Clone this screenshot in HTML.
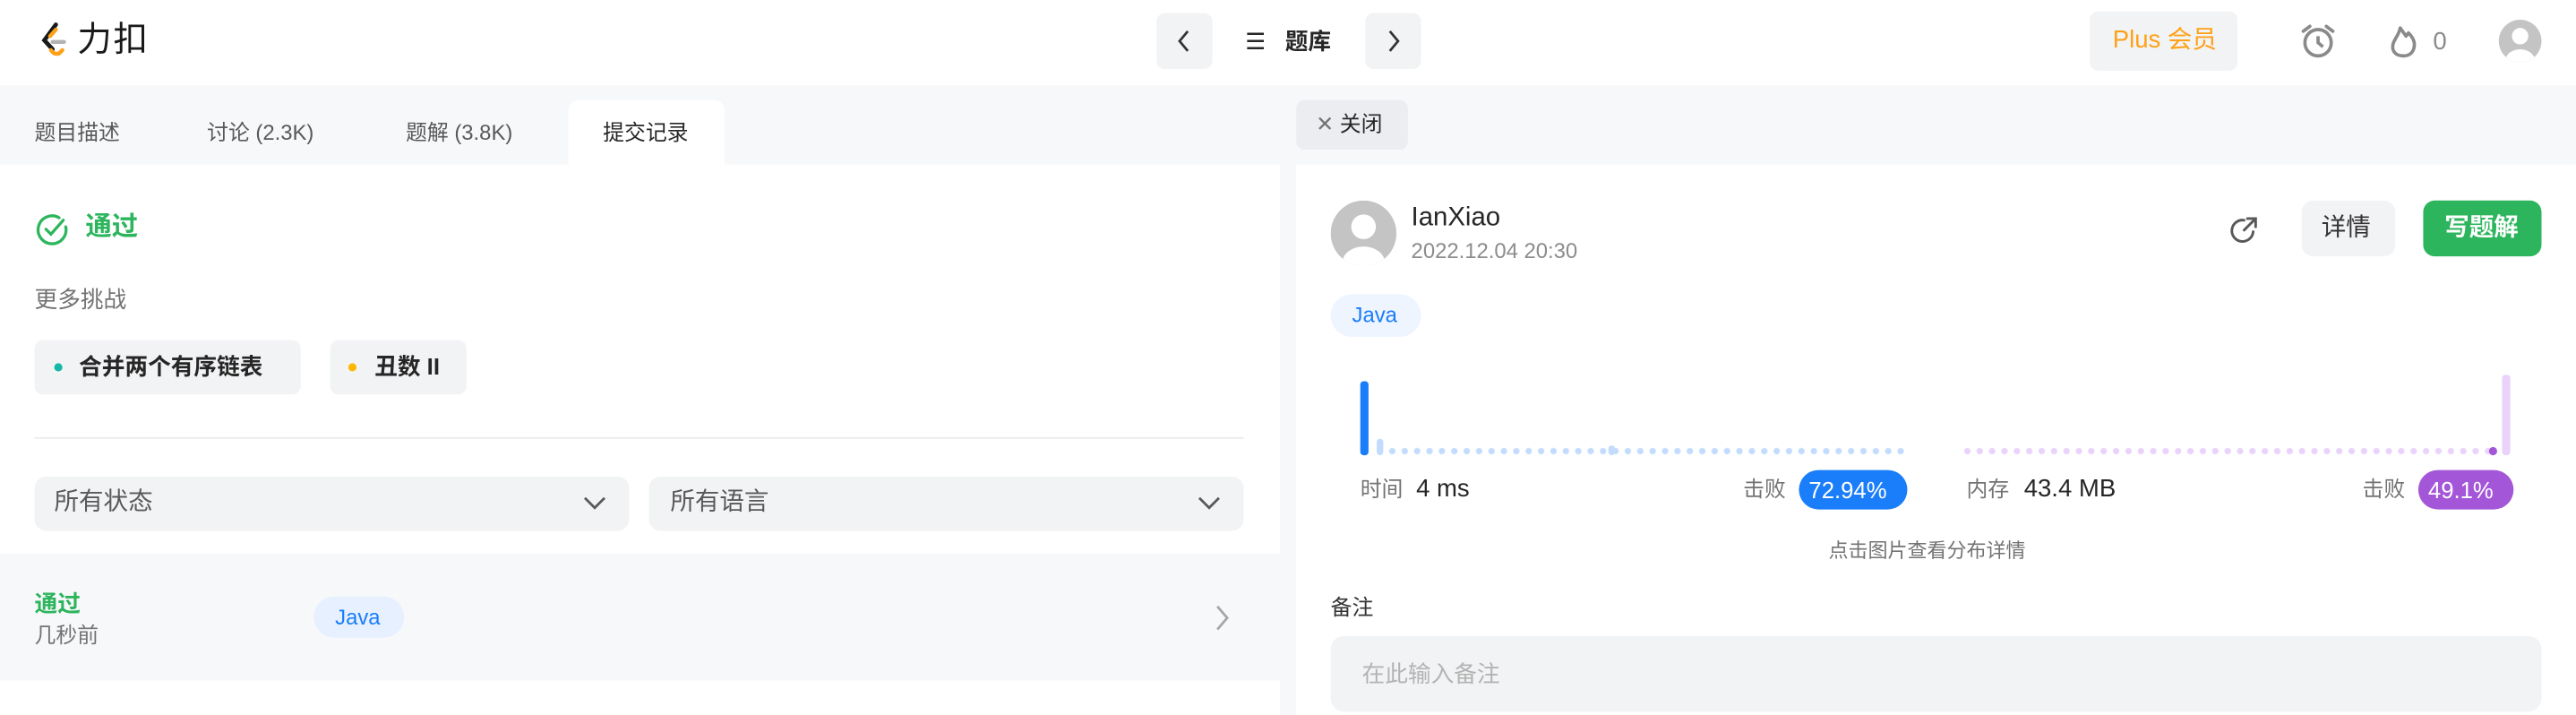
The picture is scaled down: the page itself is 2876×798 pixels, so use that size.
<!DOCTYPE html>
<html><head><meta charset="utf-8"><style>
*{margin:0;padding:0;box-sizing:border-box}
html,body{width:2876px;height:798px;overflow:hidden;background:#fff}
#w{position:absolute;left:0;top:0;width:1568px;height:435px;transform:scale(1.83418);transform-origin:0 0;font-family:"Liberation Sans","Noto Sans CJK SC",sans-serif;color:#262626;background:#f7f8fa}
.a{position:absolute}
.t{position:absolute;white-space:nowrap;line-height:1}
.btn{position:absolute;background:#f2f3f5;border-radius:5px}
</style></head><body><div id="w">
<div class="a" style="left:0;top:0;width:1568px;height:52px;background:#fff"></div>
<svg class="a" style="left:24px;top:13px" width="20" height="24" viewBox="0 0 20 24"><path d="M10 2 L3 11.5 L8 17" stroke="#1a1a1a" stroke-width="2.6" fill="none" stroke-linecap="round"/><path d="M10 5 L6.5 9" stroke="#ffa116" stroke-width="2.4" fill="none" stroke-linecap="round"/><path d="M7 17.5 Q9 20.5 12 19.5 L14 17.5" stroke="#ffa116" stroke-width="2.4" fill="none" stroke-linecap="round"/><path d="M8 12.5 H15" stroke="#b3b3b3" stroke-width="2.4" stroke-linecap="round"/></svg>
<div class="t" style="left:47px;top:14px;font-size:21px;color:#1a1a1a;letter-spacing:1px">力扣</div>
<div class="btn" style="left:704px;top:8px;width:34px;height:34px"></div>
<svg class="a" style="left:714px;top:17px" width="14" height="16"><path d="M9 2 L4 8 L9 14" stroke="#333" stroke-width="1.5" fill="none"/></svg>
<div class="t" style="left:758px;top:18px;font-size:14px">☰&nbsp;&nbsp; <b>题库</b></div>
<div class="btn" style="left:831px;top:8px;width:34px;height:34px"></div>
<svg class="a" style="left:841px;top:17px" width="14" height="16"><path d="M5 2 L10 8 L5 14" stroke="#333" stroke-width="1.5" fill="none"/></svg>
<div class="btn" style="left:1272px;top:7px;width:90px;height:36px;background:#f2f3f5"></div>
<div class="t" style="left:1286px;top:17px;font-size:15px;color:#ffa116">Plus 会员</div>
<svg class="a" style="left:1398px;top:12px" width="26" height="26" viewBox="0 0 26 26"><circle cx="13" cy="14" r="8" stroke="#8a8a8a" stroke-width="2" fill="none"/><path d="M13 10 V14 L16 16.5" stroke="#8a8a8a" stroke-width="2" fill="none"/><path d="M4 7 L8 4 M22 7 L18 4" stroke="#8a8a8a" stroke-width="2" stroke-linecap="round"/></svg>
<svg class="a" style="left:1452px;top:12px" width="22" height="26" viewBox="0 0 22 26"><path d="M11 22 C6 22 4 19 4.5 15.5 C5 12 8 10 9 5 C11 8 12 9 12.5 10 L14 8 C17 11 18 14 17.5 16.5 C17 20 14.5 22 11 22 Z" stroke="#8a8a8a" stroke-width="2" fill="none" stroke-linejoin="round"/></svg>
<div class="t" style="left:1481px;top:18px;font-size:15px;color:#8a8a8a">0</div>
<svg class="a" style="left:1520px;top:11px" width="28" height="28" viewBox="0 0 28 28"><defs><clipPath id="c"><circle cx="14" cy="14" r="13"/></clipPath></defs><circle cx="14" cy="14" r="13" fill="#c4c4c4"/><g clip-path="url(#c)" fill="#fff"><circle cx="14" cy="11" r="5"/><ellipse cx="14" cy="26" rx="9" ry="7"/></g></svg>

<div class="t" style="left:21px;top:74px;font-size:13px;color:#595959">题目描述</div>
<div class="t" style="left:126px;top:74px;font-size:13px;color:#595959">讨论 (2.3K)</div>
<div class="t" style="left:247px;top:74px;font-size:13px;color:#595959">题解 (3.8K)</div>
<div class="a" style="left:346px;top:61px;width:95px;height:40px;background:#fff;border-radius:6px 6px 0 0"></div>
<div class="t" style="left:367px;top:74px;font-size:13px;color:#262626">提交记录</div>

<div class="a" style="left:0;top:100px;width:779px;height:335px;background:#fff"></div>
<svg class="a" style="left:21px;top:129px" width="22" height="22" viewBox="0 0 22 22"><path d="M19 9 A8.5 8.5 0 1 1 15 3.5" stroke="#2db55d" stroke-width="1.8" fill="none" stroke-linecap="round"/><path d="M7 10.5 L10 13.5 L17.5 5" stroke="#2db55d" stroke-width="1.8" fill="none" stroke-linecap="round"/></svg>
<div class="t" style="left:52px;top:131px;font-size:16px;color:#2db55d;font-weight:bold">通过</div>
<div class="t" style="left:21px;top:175px;font-size:14px;color:#737373">更多挑战</div>
<div class="btn" style="left:21px;top:207px;width:162px;height:33px"></div>
<div class="a" style="left:33px;top:221px;width:5px;height:5px;border-radius:50%;background:#14b8a6"></div>
<div class="t" style="left:48px;top:216px;font-size:14px;font-weight:bold">合并两个有序链表</div>
<div class="btn" style="left:201px;top:207px;width:83px;height:33px"></div>
<div class="a" style="left:212px;top:221px;width:5px;height:5px;border-radius:50%;background:#ffb800"></div>
<div class="t" style="left:228px;top:216px;font-size:14px;font-weight:bold">丑数 II</div>
<div class="a" style="left:21px;top:266px;width:736px;height:1px;background:#ebebeb"></div>
<div class="btn" style="left:21px;top:290px;width:362px;height:33px;border-radius:7px"></div>
<div class="t" style="left:33px;top:298px;font-size:15px;color:#595959">所有状态</div>
<svg class="a" style="left:354px;top:300px" width="16" height="12"><path d="M2 3 L8 9 L14 3" stroke="#595959" stroke-width="1.5" fill="none"/></svg>
<div class="btn" style="left:395px;top:290px;width:362px;height:33px;border-radius:7px"></div>
<div class="t" style="left:408px;top:298px;font-size:15px;color:#595959">所有语言</div>
<svg class="a" style="left:728px;top:300px" width="16" height="12"><path d="M2 3 L8 9 L14 3" stroke="#595959" stroke-width="1.5" fill="none"/></svg>
<div class="a" style="left:0;top:337px;width:779px;height:77px;background:#f7f8fa"></div>
<div class="t" style="left:21px;top:360px;font-size:14px;color:#2db55d;font-weight:bold">通过</div>
<div class="t" style="left:21px;top:380px;font-size:13px;color:#737373">几秒前</div>
<div class="a" style="left:191px;top:363px;width:55px;height:25px;border-radius:13px;background:#e7f0fe"></div>
<div class="t" style="left:204px;top:369px;font-size:13px;color:#1a7dfa">Java</div>
<svg class="a" style="left:738px;top:367px" width="12" height="18"><path d="M3 2 L9 9 L3 16" stroke="#a6a6a6" stroke-width="1.5" fill="none"/></svg>

<div class="btn" style="left:789px;top:61px;width:68px;height:30px;background:#ebedf0"></div>
<div class="t" style="left:801px;top:69px;font-size:13px;color:#262626"><span style="color:#737373">✕</span> 关闭</div>
<div class="a" style="left:789px;top:100px;width:779px;height:335px;background:#fff"></div>
<svg class="a" style="left:810px;top:122px" width="40" height="40" viewBox="0 0 40 40"><defs><clipPath id="d"><circle cx="20" cy="20" r="20"/></clipPath></defs><circle cx="20" cy="20" r="20" fill="#c4c4c4"/><g clip-path="url(#d)" fill="#fff"><circle cx="20" cy="16" r="7.5"/><ellipse cx="20" cy="38" rx="13" ry="10"/></g></svg>
<div class="t" style="left:859px;top:125px;font-size:16px;color:#262626">IanXiao</div>
<div class="t" style="left:859px;top:146px;font-size:13px;color:#8c8c8c">2022.12.04 20:30</div>
<svg class="a" style="left:1356px;top:130px" width="20" height="20" viewBox="0 0 20 20"><path d="M15.5 11 A6.5 6.5 0 1 1 10 4" stroke="#595959" stroke-width="1.6" fill="none" stroke-linecap="round"/><path d="M12 3 H17 V8 M17 3 L10 10" stroke="#595959" stroke-width="1.6" fill="none" stroke-linecap="round"/></svg>
<div class="btn" style="left:1401px;top:122px;width:57px;height:34px;border-radius:7px"></div>
<div class="t" style="left:1413px;top:131px;font-size:15px;color:#333">详情</div>
<div class="a" style="left:1475px;top:122px;width:72px;height:34px;border-radius:7px;background:#2db55d"></div>
<div class="t" style="left:1488px;top:131px;font-size:15px;color:#fff;font-weight:bold">写题解</div>
<div class="a" style="left:810px;top:179px;width:55px;height:26px;border-radius:13px;background:#eef5ff"></div>
<div class="t" style="left:823px;top:185px;font-size:13px;color:#1a7dfa">Java</div>

<div class="a" style="left:828px;top:232px;width:5px;height:45px;border-radius:2px;background:#1a7dfa"></div>
<div class="a" style="left:838px;top:267px;width:4px;height:10px;border-radius:2px;background:#c3dcfd"></div>
<div class="a" style="left:979px;top:271px;width:4px;height:6px;border-radius:2px;background:#c3dcfd"></div>
<div class="a" style="left:845px;top:272px;width:317px;height:5px;background:radial-gradient(circle at 2.5px 2.5px,#c3dcfd 1.7px,transparent 2.2px) 0 0/7.55px 5px repeat-x"></div>
<div class="a" style="left:1195px;top:272px;width:322px;height:5px;background:radial-gradient(circle at 2.5px 2.5px,#ead3fb 1.7px,transparent 2.2px) 0 0/7.55px 5px repeat-x"></div>
<div class="a" style="left:1515px;top:272px;width:5px;height:5px;border-radius:50%;background:#a456d9"></div>
<div class="a" style="left:1523px;top:228px;width:5px;height:49px;border-radius:2px;background:#ead3fb"></div>

<div class="t" style="left:828px;top:291px;font-size:13px;color:#737373">时间</div>
<div class="t" style="left:862px;top:290px;font-size:15px;color:#262626">4 ms</div>
<div class="t" style="left:1061px;top:291px;font-size:13px;color:#737373">击败</div>
<div class="a" style="left:1095px;top:286px;width:66px;height:24px;border-radius:12px;background:#1a7dfa"></div>
<div class="t" style="left:1101px;top:291px;font-size:14px;color:#fff">72.94%</div>
<div class="t" style="left:1197px;top:291px;font-size:13px;color:#737373">内存</div>
<div class="t" style="left:1232px;top:290px;font-size:15px;color:#262626">43.4 MB</div>
<div class="t" style="left:1438px;top:291px;font-size:13px;color:#737373">击败</div>
<div class="a" style="left:1472px;top:286px;width:58px;height:24px;border-radius:12px;background:#a456d9"></div>
<div class="t" style="left:1478px;top:291px;font-size:14px;color:#fff">49.1%</div>
<div class="t" style="left:1113px;top:329px;font-size:12px;color:#737373">点击图片查看分布详情</div>
<div class="t" style="left:810px;top:363px;font-size:13px;color:#333">备注</div>
<div class="a" style="left:810px;top:387px;width:737px;height:46px;border-radius:8px;background:#f2f3f5"></div>
<div class="t" style="left:829px;top:403px;font-size:14px;color:#b3b3b3">在此输入备注</div>
</div></body></html>
